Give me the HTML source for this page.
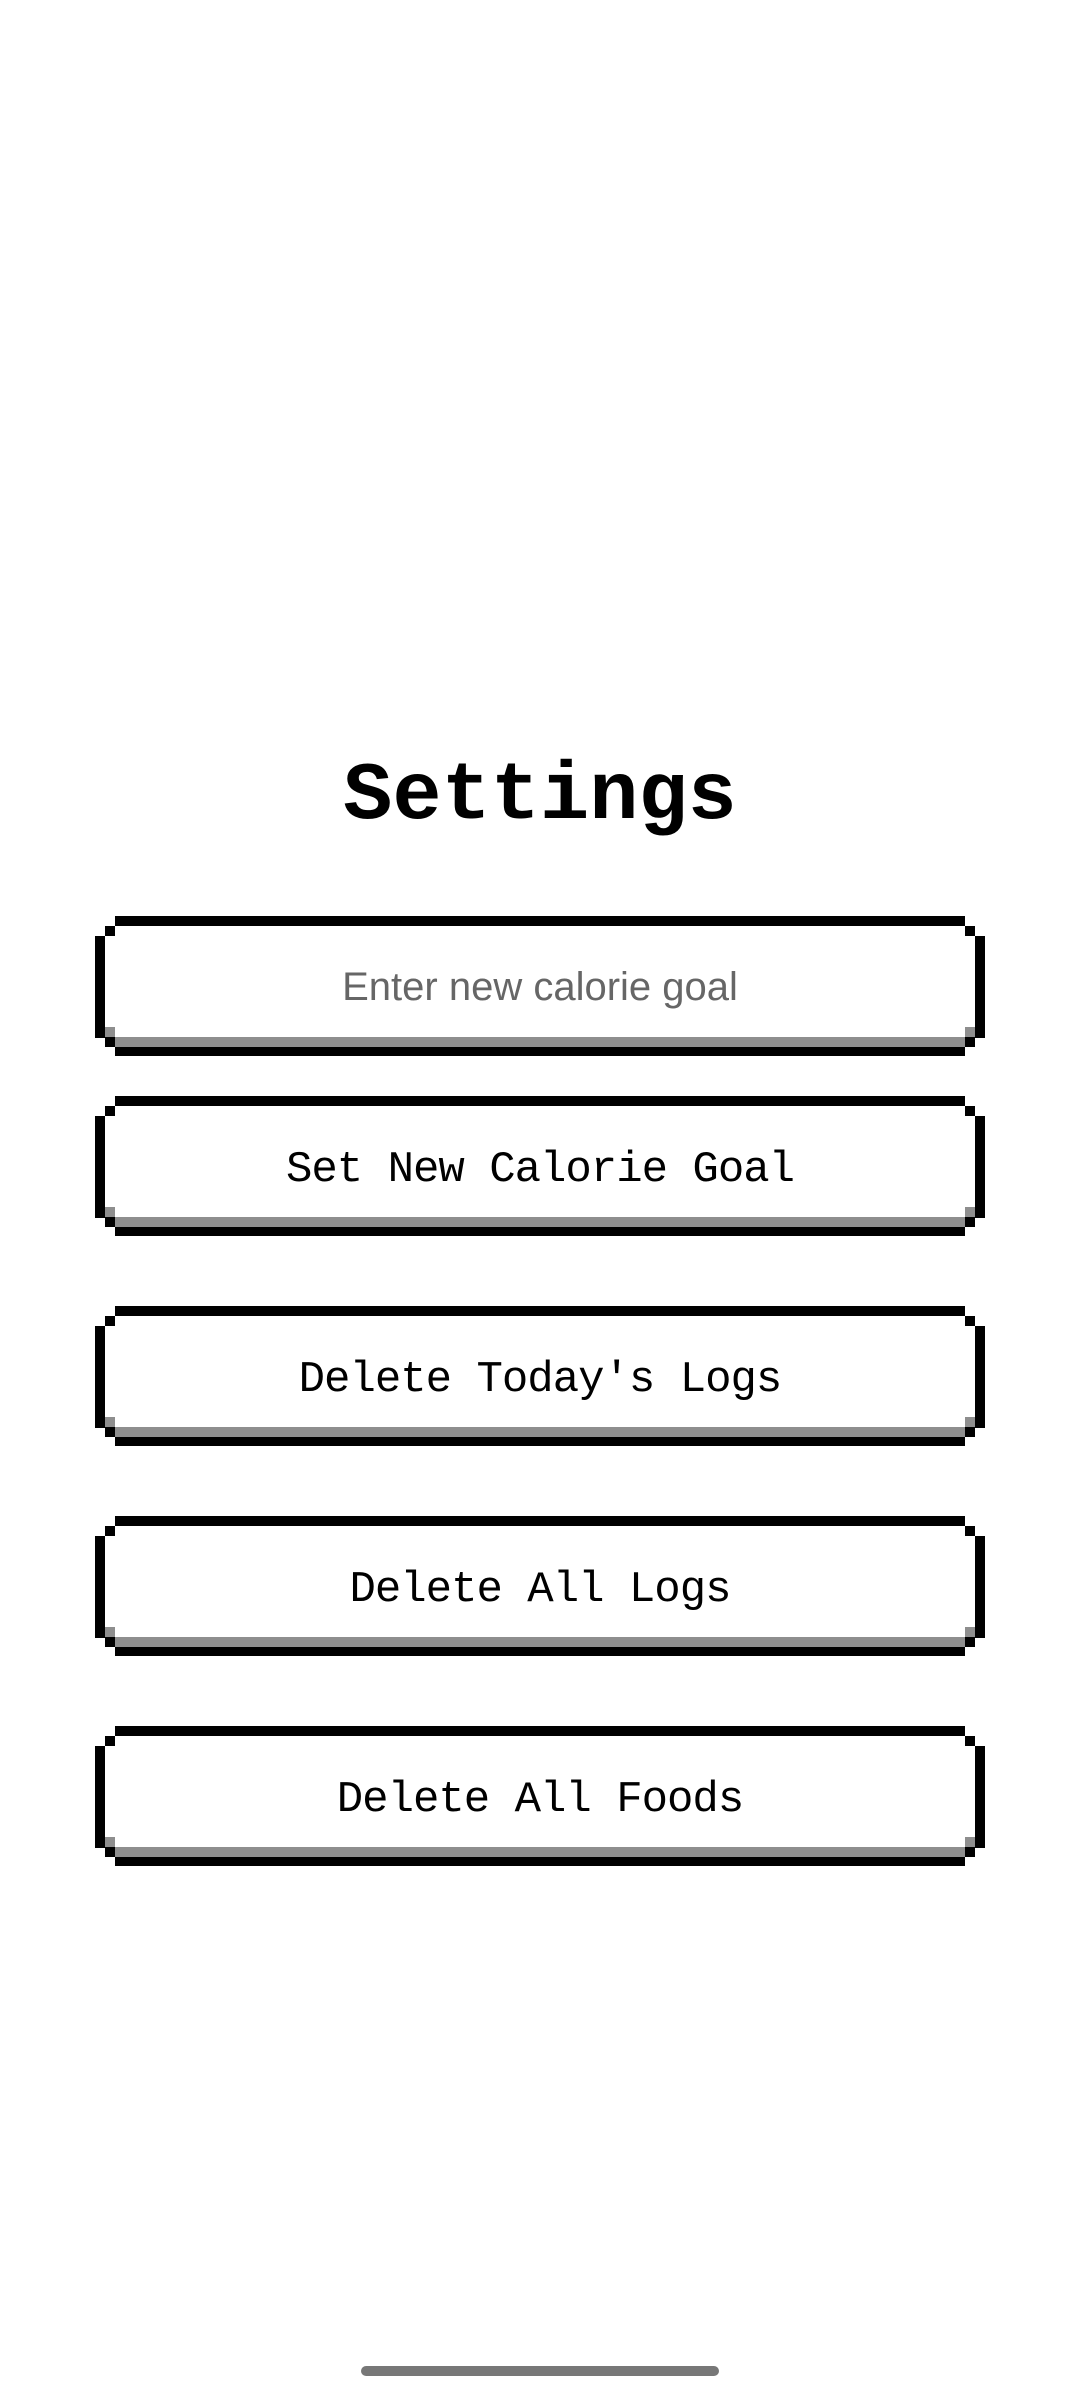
<!DOCTYPE html>
<html><head><meta charset="utf-8"><style>
html,body{margin:0;padding:0;background:#fff;width:1080px;height:2400px;overflow:hidden;position:relative}
.t{position:absolute;left:0;width:1080px;text-align:center;top:752px;font:bold 82px "Liberation Mono",monospace;line-height:90px;color:#000}
.b{position:absolute;left:95px;width:890px;height:140px}
.b svg{position:absolute;left:0;top:0}
.b span{position:absolute;left:0;right:0;top:5px;height:138px;text-align:center;font:44px "Liberation Mono",monospace;line-height:138px;color:#000;letter-spacing:-1px}
.b span.p{top:2px;font:40px "Liberation Sans",sans-serif;line-height:138px;color:#666;letter-spacing:0}
.h{position:absolute;left:361px;top:2366px;width:358px;height:10px;border-radius:5px;background:#777}
</style></head><body>
<div class="t">Settings</div>
<svg width="0" height="0" style="position:absolute"><defs><g id="f">
<rect x="20" y="0" width="850" height="10" fill="#000"/>
<rect x="10" y="10" width="10" height="10" fill="#000"/>
<rect x="870" y="10" width="10" height="10" fill="#000"/>
<rect x="0" y="20" width="10" height="102" fill="#000"/>
<rect x="880" y="20" width="10" height="102" fill="#000"/>
<rect x="10" y="111" width="10" height="10" fill="#8e8e8e"/>
<rect x="870" y="111" width="10" height="10" fill="#8e8e8e"/>
<rect x="20" y="121" width="850" height="10" fill="#8e8e8e"/>
<rect x="10" y="121" width="10" height="10" fill="#000"/>
<rect x="870" y="121" width="10" height="10" fill="#000"/>
<rect x="20" y="131" width="850" height="9" fill="#000"/>
</g></defs></svg>
<div class="b" style="top:916px"><svg width="890" height="140"><use href="#f"/></svg><span class="p">Enter new calorie goal</span></div>
<div class="b" style="top:1096px"><svg width="890" height="140"><use href="#f"/></svg><span>Set New Calorie Goal</span></div>
<div class="b" style="top:1306px"><svg width="890" height="140"><use href="#f"/></svg><span>Delete Today's Logs</span></div>
<div class="b" style="top:1516px"><svg width="890" height="140"><use href="#f"/></svg><span>Delete All Logs</span></div>
<div class="b" style="top:1726px"><svg width="890" height="140"><use href="#f"/></svg><span>Delete All Foods</span></div>
<div class="h"></div>
</body></html>
